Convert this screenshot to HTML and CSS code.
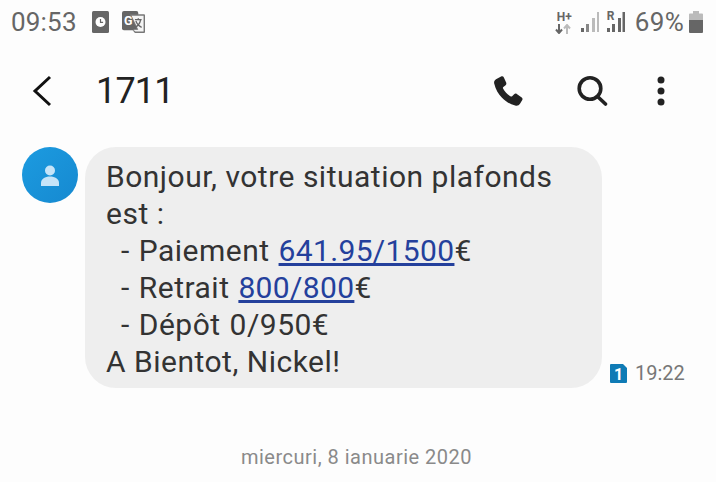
FILE: index.html
```html
<!DOCTYPE html>
<html lang="ro">
<head>
<meta charset="utf-8">
<title>1711</title>
<link rel="stylesheet" href="styles.css">
</head>
<body>
<div class="screen">
  <div class="status">
    <div class="status-left">
      <span class="time">09:53</span>
      <svg class="ic-clock" width="17" height="22" viewBox="0 0 17 22"><rect width="17" height="22" rx="1.500" fill="#666"/><circle cx="8.500" cy="11" r="5" fill="#fff"/><path d="M8.500 8v3.300h2.600" fill="none" stroke="#666" stroke-width="1.200"/></svg>
      <svg class="ic-translate" width="23" height="23" viewBox="0 0 24 24"><rect x="0" y="0" width="17" height="20" rx="2" fill="#666"/><path d="M8 3.500h15a1 1 0 0 1 1 1V22a1 1 0 0 1-1 1h-9.500L11 20h5z" fill="#777"/><path d="M10 5h12.500v16.500H14l-2-2h5z" fill="#f4f4f4"/><text x="2" y="14.500" class="g-letter">G</text><path d="M13.500 9h7M17 7.500v1.500M19.500 9c-.8 4-3.500 7-6 8M14.500 10.500c1 3 3.500 5.500 6 6.500" fill="none" stroke="#666" stroke-width="1.400"/></svg>
    </div>
    <div class="status-right">
      <div class="net">
        <span class="net-h">H+</span>
        <svg width="16" height="10" viewBox="0 0 16 10"><path d="M4 0v8M1 5.500l3 3.500 3-3.500" fill="none" stroke="#666" stroke-width="2"/><path d="M12 10V2M9 4.500l3-3.500 3 3.500" fill="none" stroke="#bbb" stroke-width="2"/></svg>
      </div>
      <svg class="sig" width="18" height="20" viewBox="0 0 18 20"><rect x="0" y="16" width="3" height="4" fill="#666"/><rect x="5" y="12" width="3" height="8" fill="#888"/><rect x="11" y="6" width="3" height="14" fill="#bbb"/><rect x="16" y="0" width="2.500" height="20" fill="#bbb"/></svg>
      <div class="sig2">
        <span class="roam">R</span>
        <svg width="18" height="20" viewBox="0 0 18 20"><rect x="0" y="16" width="3" height="4" fill="#666"/><rect x="5" y="12" width="3" height="8" fill="#666"/><rect x="11" y="6" width="3" height="14" fill="#666"/><rect x="15.500" y="0" width="2.500" height="20" fill="#666"/></svg>
      </div>
      <span class="pct">69%</span>
      <svg width="14" height="22" viewBox="0 0 14 22"><path d="M4 0h6v2.500h3a1 1 0 0 1 1 1V9H0V3.500a1 1 0 0 1 1-1h3z" fill="#bbb"/><path d="M0 9h14v12a1 1 0 0 1-1 1H1a1 1 0 0 1-1-1z" fill="#666"/></svg>
    </div>
  </div>
  <header class="bar">
    <svg class="back" width="20" height="32" viewBox="0 0 20 32"><path d="M18 2 3 16l15 14" fill="none" stroke="#111" stroke-width="3"/></svg>
    <h1 class="title">1711</h1>
    <svg class="ic-phone" width="32" height="32" viewBox="0 0 24 24"><path d="M6.800 1.200 3 3.200C1.800 4 1.300 5 1.700 6.600c1 4.100 3 7.700 5.800 10.500 2.800 2.800 5.900 4.900 9.900 5.800 1.600.4 2.800-.1 3.600-1.300l1.700-2.800c.4-.7.200-1.400-.4-1.900l-3.700-2.700c-.7-.5-1.400-.4-2 .2l-1.500 1.500c-.4.300-.8.400-1.300.1-2.300-1.400-4.200-3.400-5.500-5.800-.2-.4-.2-.9.200-1.200l1.700-1.400c.6-.5.700-1.300.4-2L8.900 1.800c-.4-.8-1.300-1-2.100-.6z" fill="#222"/></svg>
    <svg class="ic-search" width="32" height="32" viewBox="0 0 32 32"><circle cx="14" cy="13.500" r="10.800" fill="none" stroke="#222" stroke-width="3.600"/><path d="m21.500 21.500 8 7.500" fill="none" stroke="#222" stroke-width="3.600" stroke-linecap="round"/></svg>
    <svg class="ic-more" width="8" height="30" viewBox="0 0 8 30"><circle cx="4" cy="4" r="3.500" fill="#222"/><circle cx="4" cy="15" r="3.500" fill="#222"/><circle cx="4" cy="26" r="3.500" fill="#222"/></svg>
  </header>
  <main class="thread">
    <div class="msg">
      <div class="avatar">
        <svg width="20" height="21" viewBox="0 0 20 21"><circle cx="10" cy="5.500" r="5" fill="#c6e4f8"/><path d="M1 21v-3c0-4 4-6.500 9-6.500s9 2.500 9 6.500v3z" fill="#c6e4f8"/></svg>
      </div>
      <div class="bubble">
        <div class="line">Bonjour, votre situation plafonds</div>
        <div class="line">est :</div>
        <div class="line item"><span>- Paiement </span><a href="#">641.95/1500</a><span>€</span></div>
        <div class="line item"><span>- Retrait </span><a href="#">800/800</a><span>€</span></div>
        <div class="line item">- Dépôt 0/950€</div>
        <div class="line">A Bientot, Nickel!</div>
      </div>
      <div class="meta">
        <svg width="17" height="19" viewBox="0 0 17 19"><path d="M1 0h12l4 4v14a1 1 0 0 1-1 1H1a1 1 0 0 1-1-1V1a1 1 0 0 1 1-1z" fill="#0f7bb5"/><text x="8.500" y="15.500" text-anchor="middle" class="sim-num">1</text></svg>
        <span class="stamp">19:22</span>
      </div>
    </div>
    <div class="date">miercuri, 8 ianuarie 2020</div>
  </main>
</div>
</body>
</html>
```
FILE: styles.css
```css
* { box-sizing: border-box; }
html, body { margin: 0; padding: 0; }
body { background: #fdfdfd; font-family: Roboto, "Liberation Sans", sans-serif; }
.screen { width: 716px; height: 482px; overflow: hidden; display: flex; flex-direction: column; }

.status { height: 44px; display: flex; justify-content: space-between; align-items: center; padding: 0 13px 0 11px; color: #666; }
.status-left, .status-right { display: flex; align-items: center; }
.time { font-size: 26px; letter-spacing: .2px; margin-right: 15px; }
.ic-clock { margin-right: 13px; }
.g-letter { font: 700 13px Roboto, sans-serif; fill: #fff; }
.net { display: flex; flex-direction: column; align-items: flex-start; width: 16px; margin-right: 10px; line-height: 1; }
.net-h { font-size: 12px; font-weight: 700; margin-left: 2px; margin-bottom: 1px; }
.sig { margin-right: 8px; }
.sig2 { position: relative; margin-right: 10px; }
.sig2 svg { display: block; }
.roam { position: absolute; left: 0; top: -2px; font-size: 12px; font-weight: 700; line-height: 1; }
.pct { font-size: 26px; letter-spacing: .3px; margin-right: 5px; }

.bar { height: 94px; display: flex; align-items: center; padding: 0 0 0 32px; color: #222; }
.back { margin-right: 44px; }
.title { margin: 0; font-size: 36px; font-weight: 400; flex: 1; letter-spacing: -.8px; }
.ic-phone { margin-right: 52px; }
.ic-search { margin-right: 49px; }
.ic-more { margin-right: 51px; }

.thread { flex: 1; display: flex; flex-direction: column; padding-top: 9px; }
.msg { display: flex; align-items: flex-end; padding-left: 22px; }
.avatar { width: 56px; height: 56px; border-radius: 50%; background: linear-gradient(135deg, #1c9be0, #1689d0); display: flex; align-items: center; justify-content: center; align-self: flex-start; margin-right: 7px; }
.bubble { width: 517px; height: 241px; background: #eeeeee; border-radius: 31px; padding: 11px 20px 0 21px; font-size: 30px; letter-spacing: .5px; line-height: 37px; color: #333; }
.line { white-space: nowrap; }
.item { padding-left: 15px; word-spacing: 1px; }
.bubble a { color: #24409c; text-decoration: underline; letter-spacing: .35px; }
.meta { display: flex; align-items: center; margin-left: 8px; margin-bottom: 3px; }
.meta svg { margin-right: 8px; }
.stamp { font-size: 20px; color: #777; }
.sim-num { font: 700 16px Roboto, sans-serif; fill: #fff; }
.date { text-align: center; font-size: 20px; color: #8a8a8a; margin-top: 57px; padding-right: 3px; letter-spacing: .5px; }
```
